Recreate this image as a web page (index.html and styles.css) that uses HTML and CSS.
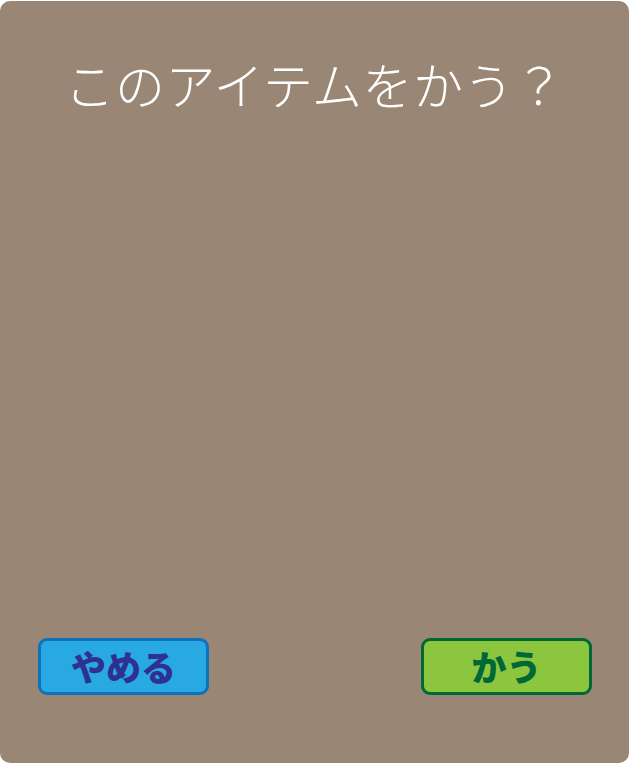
FILE: index.html
```html
<!DOCTYPE html>
<html lang="ja">
<head>
<meta charset="utf-8">
<link rel="stylesheet" href="styles.css">
</head>
<body>
<div class="panel">
  <h1 class="title">このアイテムをかう？</h1>
  <div class="spacer"></div>
  <div class="actions">
    <button class="btn btn-cancel">やめる</button>
    <button class="btn btn-buy">かう</button>
  </div>
</div>
</body>
</html>
```
FILE: styles.css
```css
html, body {
  margin: 0;
  padding: 0;
  background: #ffffff;
}
.panel {
  margin-top: 1px;
  width: 629px;
  height: 762px;
  background: #998675;
  border-radius: 10px;
  display: flex;
  flex-direction: column;
  box-sizing: border-box;
  font-family: "Noto Sans CJK JP", sans-serif;
}
.title {
  margin: 0;
  padding-top: 50px;
  text-align: center;
  color: #ffffff;
  font-size: 50px;
  font-weight: 300;
  line-height: 64px;
  letter-spacing: 0.5px;
}
.spacer {
  flex: 1;
}
.actions {
  display: flex;
  justify-content: space-between;
  padding: 0 37px 68px 38px;
}
.btn {
  width: 171px;
  height: 57px;
  border-radius: 9px;
  border: 3px solid;
  box-sizing: border-box;
  font-family: "Noto Sans CJK JP", sans-serif;
  font-weight: 900;
  font-size: 35px;
  line-height: 1;
  padding: 0 0 3px 0;
  display: flex;
  align-items: center;
  justify-content: center;
}
.btn-cancel {
  background: #29a9e1;
  border-color: #0d71bc;
  color: #2e3192;
}
.btn-buy {
  background: #8cc63f;
  border-color: #006837;
  color: #006837;
}
```
